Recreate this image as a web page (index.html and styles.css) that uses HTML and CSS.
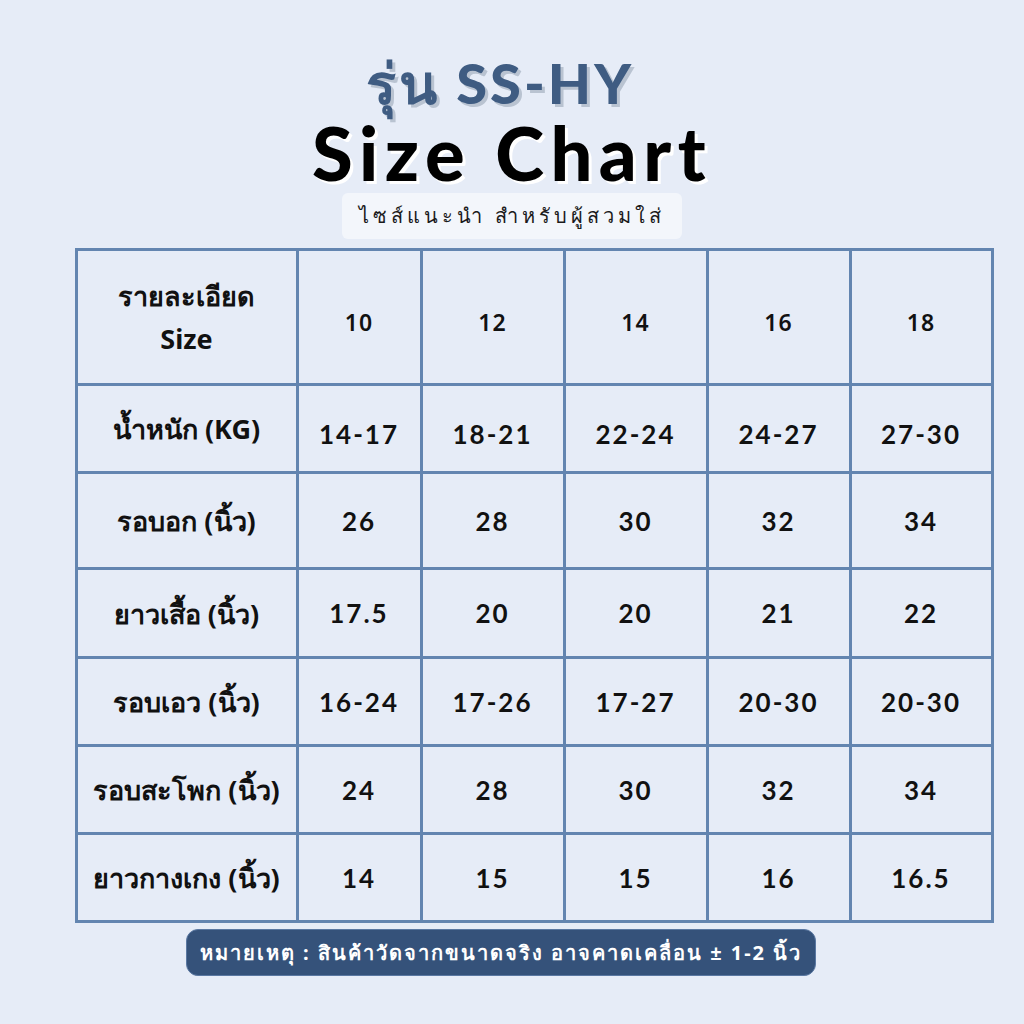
FILE: index.html
```html
<!DOCTYPE html>
<html lang="th">
<head>
<meta charset="utf-8">
<link rel="stylesheet" href="styles.css">
</head>
<body>
<div class="page">
  <header class="head">
    <div class="model">รุ่น SS-HY</div>
    <div class="title">Size Chart</div>
    <div class="subtitle">ไซส์แนะนำ สำหรับผู้สวมใส่</div>
  </header>
  <table class="chart">
    <colgroup>
      <col class="c0"><col class="c1"><col class="c2"><col class="c3"><col class="c4"><col class="c5">
    </colgroup>
    <tr class="r-head"><th>รายละเอียด<br>Size</th><td class="num-light">10</td><td class="num-light">12</td><td class="num-light">14</td><td class="num-light">16</td><td class="num-light">18</td></tr>
    <tr class="r1"><th>น้ำหนัก (KG)</th><td class="low">14-17</td><td class="low">18-21</td><td class="low">22-24</td><td class="low">24-27</td><td class="low">27-30</td></tr>
    <tr class="r2"><th>รอบอก (นิ้ว)</th><td>26</td><td>28</td><td>30</td><td>32</td><td>34</td></tr>
    <tr class="r3"><th>ยาวเสื้อ (นิ้ว)</th><td>17.5</td><td>20</td><td>20</td><td>21</td><td>22</td></tr>
    <tr class="r4"><th>รอบเอว (นิ้ว)</th><td>16-24</td><td>17-26</td><td>17-27</td><td>20-30</td><td>20-30</td></tr>
    <tr class="r5"><th>รอบสะโพก (นิ้ว)</th><td>24</td><td>28</td><td>30</td><td>32</td><td>34</td></tr>
    <tr class="r6"><th>ยาวกางเกง (นิ้ว)</th><td>14</td><td>15</td><td>15</td><td>16</td><td>16.5</td></tr>
  </table>
  <div class="note">หมายเหตุ : สินค้าวัดจากขนาดจริง อาจคาดเคลื่อน ± 1-2 นิ้ว</div>
</div>
</body>
</html>
```
FILE: styles.css
```css
* { box-sizing: border-box; }
html, body { margin: 0; padding: 0; }
body {
  width: 1024px;
  height: 1024px;
  background: #e6ecf7;
  font-family: "Noto Sans", "Lato", "DejaVu Sans", sans-serif;
  color: #111;
  overflow: hidden;
}
.page {
  display: flex;
  flex-direction: column;
  align-items: center;
  padding-top: 51px;
}
.head {
  display: flex;
  flex-direction: column;
  align-items: center;
}
.model {
  font-family: "Lato", "Noto Sans", sans-serif;
  font-weight: 900;
  font-size: 56px;
  line-height: 64px;
  color: #3f5c82;
  letter-spacing: 3px;
  text-shadow: 3px 3px 0 #b9c3d1;
  margin-left: -24px;
}
.title {
  font-family: "Lato", "Noto Sans", sans-serif;
  font-weight: 900;
  font-size: 74px;
  line-height: 76px;
  letter-spacing: 6.5px;
  color: #000;
  text-shadow: 3px 3px 0 #ffffff;
}
.subtitle {
  margin-top: 2px;
  background: #f3f6fb;
  border-radius: 6px;
  width: 340px;
  height: 46px;
  display: flex;
  align-items: center;
  justify-content: center;
  font-size: 20px;
  letter-spacing: 4px;
  color: #1b1b1b;
}
.chart {
  margin-top: 9px;
  margin-left: 44px;
  border-collapse: collapse;
  border: 3px solid #6385b0;
  table-layout: fixed;
  width: 916px;
}
.chart th, .chart td {
  border: 3px solid #6385b0;
  text-align: center;
  vertical-align: middle;
  padding: 0;
  color: #111;
}
.chart th {
  font-size: 27px;
  font-weight: 700;
  line-height: 43px;
}
.chart td {
  font-family: "Lato", "Noto Sans", sans-serif;
  font-weight: 700;
  font-size: 26px;
  letter-spacing: 2px;
}
.chart td.num-light {
  font-family: "Noto Sans", sans-serif;
  font-weight: 600;
  font-size: 23px;
  letter-spacing: 1px;
  padding-top: 10px;
}
.chart td.low { padding-top: 10px; }
.c0 { width: 221px; }
.c1 { width: 124px; }
.c2 { width: 143px; }
.c3 { width: 143px; }
.c4 { width: 143px; }
.c5 { width: 142px; }
.r-head { height: 135px; }
.r1 { height: 88px; }
.r2 { height: 96px; }
.r3 { height: 89px; }
.r4 { height: 88px; }
.r5 { height: 88px; }
.r6 { height: 88px; }
.note {
  margin-top: 6px;
  margin-left: -22px;
  background: #35527a;
  border: 1px solid #5a78a2;
  border-radius: 12px;
  width: 630px;
  height: 47px;
  display: flex;
  align-items: center;
  justify-content: center;
  color: #fff;
  font-weight: 700;
  font-size: 20px;
  letter-spacing: 2px;
}
```
